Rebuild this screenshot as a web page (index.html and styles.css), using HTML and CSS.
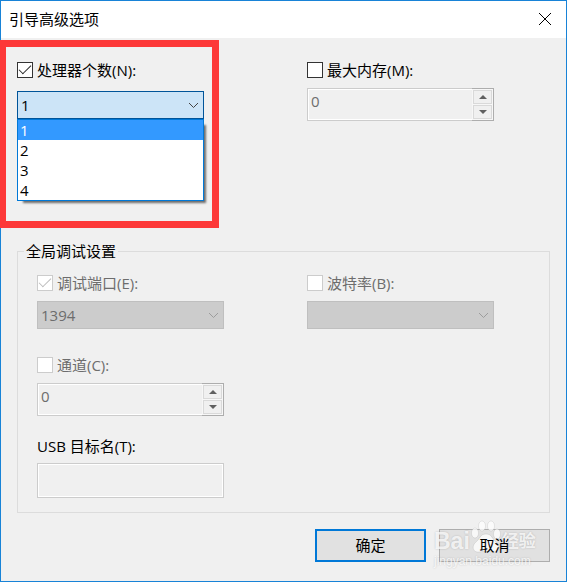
FILE: index.html
```html
<!DOCTYPE html>
<html lang="zh-CN">

<head>
    <meta charset="UTF-8">
    <meta name="viewport" content="width=device-width, initial-scale=1.0">
    <title>引导高级选项</title>
    <link rel="stylesheet" href="styles.css">
</head>

<body>
    <div class="dialog">
        <header class="title-bar">
            <h1>引导高级选项</h1>
            <button type="button" class="close" aria-label="关闭">
                <svg width="12" height="12" viewBox="0 0 12 12">
                    <path d="M0 0 L12 12 M12 0 L0 12" stroke="#000" fill="none" />
                </svg>
            </button>
        </header>

        <form class="options">
            <div class="row top-row">
                <div class="field processors">
                    <label class="check"><input type="checkbox" checked>处理器个数(N):</label>
                    <div class="select open">
                        <select aria-label="处理器个数">
                            <option>1</option>
                            <option>2</option>
                            <option>3</option>
                            <option>4</option>
                        </select>
                        <svg class="chevron" width="11" height="7" viewBox="0 0 11 7">
                            <path d="M1 1 L5.5 5.5 L10 1" />
                        </svg>
                        <ul class="list">
                            <li class="selected">1</li>
                            <li>2</li>
                            <li>3</li>
                            <li>4</li>
                        </ul>
                    </div>
                </div>
                <div class="field">
                    <label class="check"><input type="checkbox">最大内存(M):</label>
                    <div class="spinner">
                        <input type="text" value="0" aria-label="最大内存" disabled>
                        <div class="spin-buttons">
                            <button type="button" aria-label="增加" disabled><svg width="8" height="4" viewBox="0 0 8 4"><path d="M0 4 L4 0 L8 4 Z" /></svg></button>
                            <button type="button" aria-label="减少" disabled><svg width="8" height="4" viewBox="0 0 8 4"><path d="M0 0 L4 4 L8 0 Z" /></svg></button>
                        </div>
                    </div>
                </div>
            </div>

            <fieldset class="debug">
                <legend>全局调试设置</legend>
                <div class="debug-body">
                    <div class="row">
                        <div class="field">
                            <label class="check disabled"><input type="checkbox" checked disabled>调试端口(E):</label>
                            <div class="select">
                                <select aria-label="调试端口" disabled>
                                    <option>1394</option>
                                </select>
                                <svg class="chevron" width="11" height="7" viewBox="0 0 11 7">
                                    <path d="M1 1 L5.5 5.5 L10 1" />
                                </svg>
                            </div>
                        </div>
                        <div class="field">
                            <label class="check disabled"><input type="checkbox" disabled>波特率(B):</label>
                            <div class="select">
                                <select aria-label="波特率" disabled>
                                    <option></option>
                                </select>
                                <svg class="chevron" width="11" height="7" viewBox="0 0 11 7">
                                    <path d="M1 1 L5.5 5.5 L10 1" />
                                </svg>
                            </div>
                        </div>
                    </div>
                    <div class="field channel">
                        <label class="check disabled"><input type="checkbox" disabled>通道(C):</label>
                        <div class="spinner">
                            <input type="text" value="0" aria-label="通道" disabled>
                            <div class="spin-buttons">
                                <button type="button" aria-label="增加" disabled><svg width="8" height="4" viewBox="0 0 8 4"><path d="M0 4 L4 0 L8 4 Z" /></svg></button>
                                <button type="button" aria-label="减少" disabled><svg width="8" height="4" viewBox="0 0 8 4"><path d="M0 0 L4 4 L8 0 Z" /></svg></button>
                            </div>
                        </div>
                    </div>
                    <div class="field usb">
                        <label for="usb-target">USB 目标名(T):</label>
                        <input type="text" id="usb-target" class="text-box" disabled>
                    </div>
                </div>
            </fieldset>

            <div class="actions">
                <button type="button" class="btn primary">确定</button>
                <div class="cancel">
                    <button type="button" class="btn"><span class="btn-text">取消</span></button>
                    <div class="watermark">
                        <div class="mark-name">
                            <span class="bai">Bai</span>
                            <svg width="32" height="34" viewBox="0 0 32 34">
                                <ellipse cx="5" cy="13" rx="3.5" ry="5" />
                                <ellipse cx="12" cy="6" rx="3.5" ry="5" />
                                <ellipse cx="21" cy="6" rx="3.5" ry="5" />
                                <ellipse cx="27" cy="14" rx="3.5" ry="5" />
                                <path d="M16 14 C10 14 10 19 6 22 C1 26 3 33 9 32 C14 31 18 31 23 32 C29 33 31 26 26 22 C22 19 22 14 16 14 Z" />
                            </svg>
                            <span class="jingyan">经验</span>
                        </div>
                        <div class="mark-url">jingyan.baidu.com</div>
                    </div>
                </div>
            </div>
        </form>

        <div class="highlight"></div>
    </div>
</body>

</html>
```
FILE: styles.css
```css
* {
    margin: 0;
    padding: 0;
    box-sizing: border-box;
}

body,
input,
select,
button {
    font-family: "Open Sans", "Noto Sans CJK SC", sans-serif;
    font-size: 15px;
    line-height: 20px;
    color: #000;
}

.dialog {
    position: relative;
    min-height: 100vh;
    background-color: #f0f0f0;
    border: 1px solid #1883d7;
}

/* title bar */
.title-bar {
    display: flex;
    justify-content: space-between;
    align-items: center;
    height: 37px;
    padding: 0 8px 2px;
    background-color: #fff;
}

.title-bar h1 {
    font-size: 15px;
    font-weight: 400;
}

.close {
    display: flex;
    padding: 7px;
    background: none;
    border: none;
}

/* form */
.options {
    padding: 22px 16px 19px;
}

.row {
    display: grid;
    grid-template-columns: 187px 187px;
    justify-content: space-between;
}

.top-row {
    padding-right: 56px;
    margin-bottom: 120px;
}

.field {
    display: flex;
    flex-direction: column;
    gap: 8px;
    width: 187px;
}

.processors {
    gap: 11px;
}

.check {
    display: flex;
    align-items: center;
    gap: 4px;
}

.check input {
    appearance: none;
    display: grid;
    place-items: center;
    width: 16px;
    height: 16px;
    background-color: #fff;
    border: 1px solid #333;
}

.check input:checked::before {
    content: "";
    width: 11px;
    height: 5px;
    border-left: 1px solid #222;
    border-bottom: 1px solid #222;
    transform: translateY(-2px) rotate(-45deg);
}

.disabled {
    color: #6d6d6d;
}

.check input:disabled {
    border-color: #ccc;
}

.check input:disabled::before {
    border-color: #bbb;
}

/* drop-downs */
.select {
    position: relative;
}

.select select {
    appearance: none;
    display: block;
    width: 100%;
    height: 28px;
    padding: 0 3px;
    background-color: #ccc;
    border: 1px solid #bfbfbf;
    border-radius: 0;
    color: #6d6d6d;
    opacity: 1;
}

.select.open select {
    background-color: #cce4f7;
    border-color: #005499;
    color: #000;
}

.chevron {
    position: absolute;
    top: 11px;
    right: 5px;
    fill: none;
    stroke: #9c9c9c;
}

.open .chevron {
    stroke: #444;
}

.list {
    position: absolute;
    top: 28px;
    left: 0;
    width: 100%;
    list-style: none;
    background-color: #fff;
    border: 1px solid #0078d7;
    box-shadow: 4px 4px 2px -2px rgba(0, 0, 0, 0.55);
}

.list li {
    padding: 0 2px;
}

.list .selected {
    background-color: #3399ff;
    color: #fff;
}

/* number boxes */
.spinner {
    display: flex;
    height: 33px;
}

.spinner input {
    flex: 1;
    min-width: 0;
    padding: 0 3px 8px;
    background-color: #f0f0f0;
    border: 1px solid #ccc;
    border-right: none;
    box-shadow: inset 1px 1px #fff, inset 0 -1px #fff;
    color: #6d6d6d;
}

.spin-buttons {
    display: flex;
    flex-direction: column;
    gap: 1px;
    width: 22px;
    padding: 1px;
    background-color: #f7f7f7;
    border: 1px solid #adadad;
    border-left: none;
}

.spin-buttons button {
    flex: 1;
    display: flex;
    justify-content: center;
    align-items: center;
    background-color: #f0f0f0;
    border: 1px solid #d9d9d9;
}

.spin-buttons svg {
    fill: #606060;
}

.text-box {
    width: 100%;
    height: 35px;
    padding: 0 3px;
    background-color: #f0f0f0;
    border: 1px solid #ccc;
    box-shadow: inset 0 0 0 1px #fff;
}

/* group box */
.debug {
    border: 1px solid #dcdcdc;
}

.debug legend {
    margin-left: 6px;
    padding: 0 2px;
}

.debug-body {
    padding: 12px 55px 14px 19px;
}

.channel {
    margin-top: 26px;
}

.usb {
    margin-top: 20px;
    gap: 7px;
}

/* buttons */
.actions {
    display: flex;
    justify-content: flex-end;
    gap: 13px;
    margin-top: 16px;
}

.btn {
    display: block;
    width: 111px;
    height: 33px;
    padding-bottom: 2px;
    background-color: #e1e1e1;
    border: 1px solid #adadad;
}

.primary {
    border: 2px solid #0078d7;
}

.cancel {
    position: relative;
}

/* logo over the cancel button, its label stays readable on top */
.watermark {
    position: absolute;
    top: -9px;
    left: -5px;
    color: rgba(255, 255, 255, 0.8);
    text-shadow: 0 0 2px rgba(0, 0, 0, 0.2);
    white-space: nowrap;
    pointer-events: none;
}

.btn-text {
    position: relative;
    z-index: 1;
}

.mark-name {
    display: flex;
    align-items: flex-end;
    height: 34px;
}

.mark-name svg {
    fill: rgba(255, 255, 255, 0.75);
    stroke: rgba(0, 0, 0, 0.08);
}

.bai {
    font-family: "Liberation Sans", sans-serif;
    font-size: 23px;
    font-weight: 700;
    line-height: 26px;
}

.jingyan {
    font-size: 17px;
    font-weight: 700;
    line-height: 26px;
}

.mark-url {
    font-family: "Liberation Sans", sans-serif;
    font-size: 12px;
    line-height: 14px;
}

/* red frame round the processor setting */
.highlight {
    position: absolute;
    top: 39px;
    left: -1px;
    width: 219px;
    height: 188px;
    border: 7px solid #fd3838;
    border-left-width: 6px;
    pointer-events: none;
}
```
